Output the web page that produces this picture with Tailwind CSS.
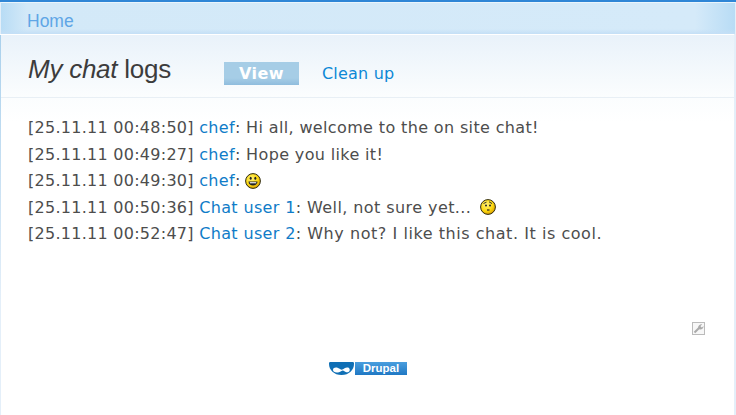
<!DOCTYPE html>
<html><head><meta charset="utf-8"><script src="https://cdn.jsdelivr.net/npm/@tailwindcss/browser@4"></script></head>
<body class="m-0 overflow-hidden">
<div class="w-[736px] h-[415px] flex flex-col pt-[2px] font-['DejaVu_Sans',sans-serif] text-[#4d4d4d] text-[16px] overflow-hidden bg-[linear-gradient(#2f86d6_0,#2f86d6_2px,#e4eff9_2px)]">
<div class="h-[32px] shrink-0 mx-[1px] border-t border-[#eaf5fc] flex items-center pl-[26px] pt-[6px] bg-[linear-gradient(90deg,#b8dcf5_0,#d3e9f8_26px,#d5eaf9_calc(100%-40px),#b8dcf5_100%)] relative">
<span class="text-[#5fa6e6] text-[17.5px] font-['Liberation_Sans',sans-serif]">Home</span>
<div class="absolute left-0 right-0 bottom-0 h-[5px] bg-[linear-gradient(transparent,#c4dff6)]"></div>
</div>
<div class="flex-1 border-t border-white border-l-[1px] mr-[2px] bg-white flex flex-col min-h-0 relative">
<div class="absolute -left-[1px] top-0 bottom-0 w-[1px] bg-[linear-gradient(#a9d0ec,#e4eff9_70%)]"></div>
<div class="h-[63px] shrink-0 border-b border-[#e8eff5] bg-[linear-gradient(#e9f2fa,#fbfdfe)] flex items-start pl-[27px]">
<h1 class="mt-[19px] text-[26px] leading-[30px] font-normal tracking-[-0.25px] font-['Liberation_Sans',sans-serif] text-[#3c3c3c] w-[196px]"><em>My chat</em> logs</h1>
<a class="mt-[27px] w-[75px] h-[23px] flex items-center justify-center text-white font-bold text-[16px] tracking-[0.5px] bg-[linear-gradient(#a6cde6,#a6cde6_70%,#8fbcdd)]">View</a>
<a class="mt-[27px] ml-[23px] h-[23px] flex items-center text-[#0d88d6] tracking-[0.2px]">Clean up</a>
</div>
<div class="h-[24px] shrink-0 -mb-[24px] bg-[linear-gradient(#fbfdfe,#fff)]"></div>
<div class="relative pl-[27px] pt-[17px] leading-[26.5px] flex-1">
<div class="whitespace-pre"><span class="tracking-[0.27px]">[25.11.11 00:48:50] </span><a class="text-[#0f7cc8] tracking-[0.33px]">chef</a><span class="tracking-[0.36px]">: Hi all, welcome to the on site chat!</span></div>
<div class="whitespace-pre"><span class="tracking-[0.27px]">[25.11.11 00:49:27] </span><a class="text-[#0f7cc8] tracking-[0.33px]">chef</a><span class="tracking-[0.36px]">: Hope you like it!</span></div>
<div class="flex items-center whitespace-pre"><span class="tracking-[0.27px]">[25.11.11 00:49:30] </span><a class="text-[#0f7cc8] tracking-[0.33px]">chef</a>: <svg class="ml-[0px] -mt-[1px]" width="16" height="16" viewBox="0 0 16 16"><defs><radialGradient id="a" cx=".4" cy=".35" r=".7"><stop offset="0" stop-color="#fff27a"/><stop offset=".6" stop-color="#fcd80f"/><stop offset="1" stop-color="#d89a00"/></radialGradient></defs><circle cx="8" cy="8" r="7.400" fill="url(#a)" stroke="#2e2a10"/><ellipse cx="5.700" cy="5.200" rx="1" ry="1.500" fill="#222"/><ellipse cx="10.300" cy="5.200" rx="1" ry="1.500" fill="#222"/><path d="M3.500 8.500h9c0 2.400-2 4-4.500 4s-4.500-1.600-4.500-4z" fill="#222"/><path d="M4.800 9.200h6.400v1.100H4.800z" fill="#fff"/></svg></div>
<div class="flex items-center whitespace-pre"><span class="tracking-[0.27px]">[25.11.11 00:50:36] </span><a class="text-[#0f7cc8] tracking-[0.35px]">Chat user 1</a><span class="tracking-[0.42px]">: Well, not sure yet... </span><svg class="ml-[3px] -mt-[1px]" width="16" height="16" viewBox="0 0 16 16"><defs><radialGradient id="b" cx=".4" cy=".35" r=".7"><stop offset="0" stop-color="#fff27a"/><stop offset=".6" stop-color="#fcd80f"/><stop offset="1" stop-color="#d89a00"/></radialGradient></defs><circle cx="8" cy="8" r="7.400" fill="url(#b)" stroke="#2e2a10"/><path d="M3.500 4.500L6.500 3.200M9 2.800l3 1.700" stroke="#333" fill="none"/><circle cx="6" cy="6.500" r="1" fill="#222"/><circle cx="10" cy="6.500" r="1" fill="#222"/><path d="M7 11h2.500" stroke="#222" stroke-width="1.200"/></svg></div>
<div class="whitespace-pre"><span class="tracking-[0.27px]">[25.11.11 00:52:47] </span><a class="text-[#0f7cc8] tracking-[0.35px]">Chat user 2</a><span class="tracking-[0.55px]">: Why not? I like this chat. It is cool.</span></div>
<div class="absolute left-[691px] top-[224px] w-[13px] h-[13px] border border-[#bbb] bg-[#f7f7f7] flex items-center justify-center"><svg width="11" height="11" viewBox="0 0 11 11"><path d="M1.500 9.500L6.300 4.700" stroke="#aaa" stroke-width="2" fill="none"/><path d="M5.300 5.500C4.600 3.300 6.500 .8 9.300 1.200L7.500 3l.5 1 1 .5L10.500 3C10.700 5.500 8.300 7 6.300 6.200z" fill="#aaa"/></svg></div>
</div>
<div class="h-[53px] shrink-0 flex justify-center items-start ml-[1px]">
<div class="flex h-[13px] gap-[1px]">
<svg width="25" height="13" viewBox="0 0 25 13"><path d="M1 0h23c1 0 1 1 1 2c0 6-5 11-12.500 11S0 8 0 2c0-1 0-2 1-2z" fill="#0f6fb5"/><path d="M4 8c0-2.500 3-3 5-2 2 1 3 2 4.500 1.500 1.500-.7 3-2.500 5.500-2 2 .500 2.500 3.500.5 4.500-2 .8-3.500-.5-5-1.300-1.500-.7-2.500 1-4.500 1.500-3 .8-6 0-6-2.200z" fill="#fff"/></svg>
<div class="w-[52px] h-[13px] bg-[linear-gradient(#4a9ede,#1f78c4)] text-white text-[11.5px] leading-[13px] font-bold text-center font-['Liberation_Sans',sans-serif]">Drupal</div>
</div>
</div>
</div>
</div>
</body></html>
